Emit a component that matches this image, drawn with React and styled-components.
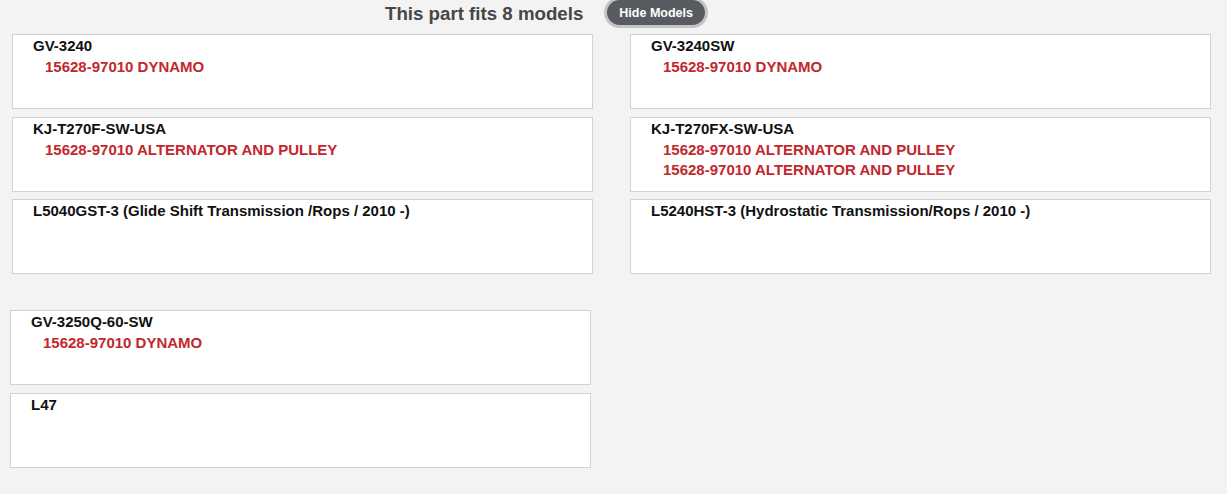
import { createGlobalStyle, styled } from 'styled-components';

const GlobalStyle = createGlobalStyle`
  html, body {
    margin: 0;
    padding: 0;
    background: #f3f3f3;
    font-family: "Liberation Sans", Arial, sans-serif;
  }
`;

const Page = styled.div`
  width: 1227px;
  min-height: 494px;
  background: #f3f3f3;
`;

const Header = styled.div`
  display: flex;
  align-items: center;
  gap: 21px;
  height: 28px;
  padding-left: 385px;
  margin-bottom: 6px;
`;

const Title = styled.h2`
  margin: 0;
  font-size: 18.7px;
  font-weight: bold;
  color: #464646;
  line-height: 24px;
`;

const ToggleButton = styled.button`
  height: 31px;
  margin-top: -3px;
  padding: 0 12px;
  border-radius: 16px;
  border: 3px solid #c4c4c4;
  background: #585c61;
  color: #fff;
  font-family: "Liberation Sans", Arial, sans-serif;
  font-size: 12.5px;
  font-weight: bold;
  cursor: pointer;
`;

const Grid = styled.div`
  display: grid;
  grid-template-columns: repeat(${p => p.$cols}, 581px);
  column-gap: 37px;
  row-gap: 7.5px;
  margin-left: ${p => p.$left}px;
  margin-bottom: 36px;
`;

const Card = styled.div`
  box-sizing: border-box;
  height: 75px;
  padding: 0 0 0 20px;
  background: #fff;
  border: 1px solid #d2d2d2;
`;

const ModelName = styled.div`
  font-size: 15px;
  font-weight: bold;
  line-height: 21px;
  margin-bottom: 1px;
  color: #111;
`;

const Part = styled.div`
  padding-left: 12px;
  font-size: 15px;
  font-weight: bold;
  line-height: 20px;
  color: #c1272d;
`;

const groups = [
  {
    cols: 2,
    left: 12,
    models: [
      { name: 'GV-3240', parts: ['15628-97010 DYNAMO'] },
      { name: 'GV-3240SW', parts: ['15628-97010 DYNAMO'] },
      { name: 'KJ-T270F-SW-USA', parts: ['15628-97010 ALTERNATOR AND PULLEY'] },
      {
        name: 'KJ-T270FX-SW-USA',
        parts: ['15628-97010 ALTERNATOR AND PULLEY', '15628-97010 ALTERNATOR AND PULLEY'],
      },
      { name: 'L5040GST-3 (Glide Shift Transmission /Rops / 2010 -)', parts: [] },
      { name: 'L5240HST-3 (Hydrostatic Transmission/Rops / 2010 -)', parts: [] },
    ],
  },
  {
    cols: 1,
    left: 10,
    models: [
      { name: 'GV-3250Q-60-SW', parts: ['15628-97010 DYNAMO'] },
      { name: 'L47', parts: [] },
    ],
  },
];

export default function App() {
  return (
    <Page>
      <GlobalStyle />
      <Header>
        <Title>This part fits 8 models</Title>
        <ToggleButton type="button">Hide Models</ToggleButton>
      </Header>
      {groups.map((group, gi) => (
        <Grid key={gi} $cols={group.cols} $left={group.left}>
          {group.models.map(model => (
            <Card key={model.name}>
              <ModelName>{model.name}</ModelName>
              {model.parts.map((part, i) => (
                <Part key={i}>{part}</Part>
              ))}
            </Card>
          ))}
        </Grid>
      ))}
    </Page>
  );
}
